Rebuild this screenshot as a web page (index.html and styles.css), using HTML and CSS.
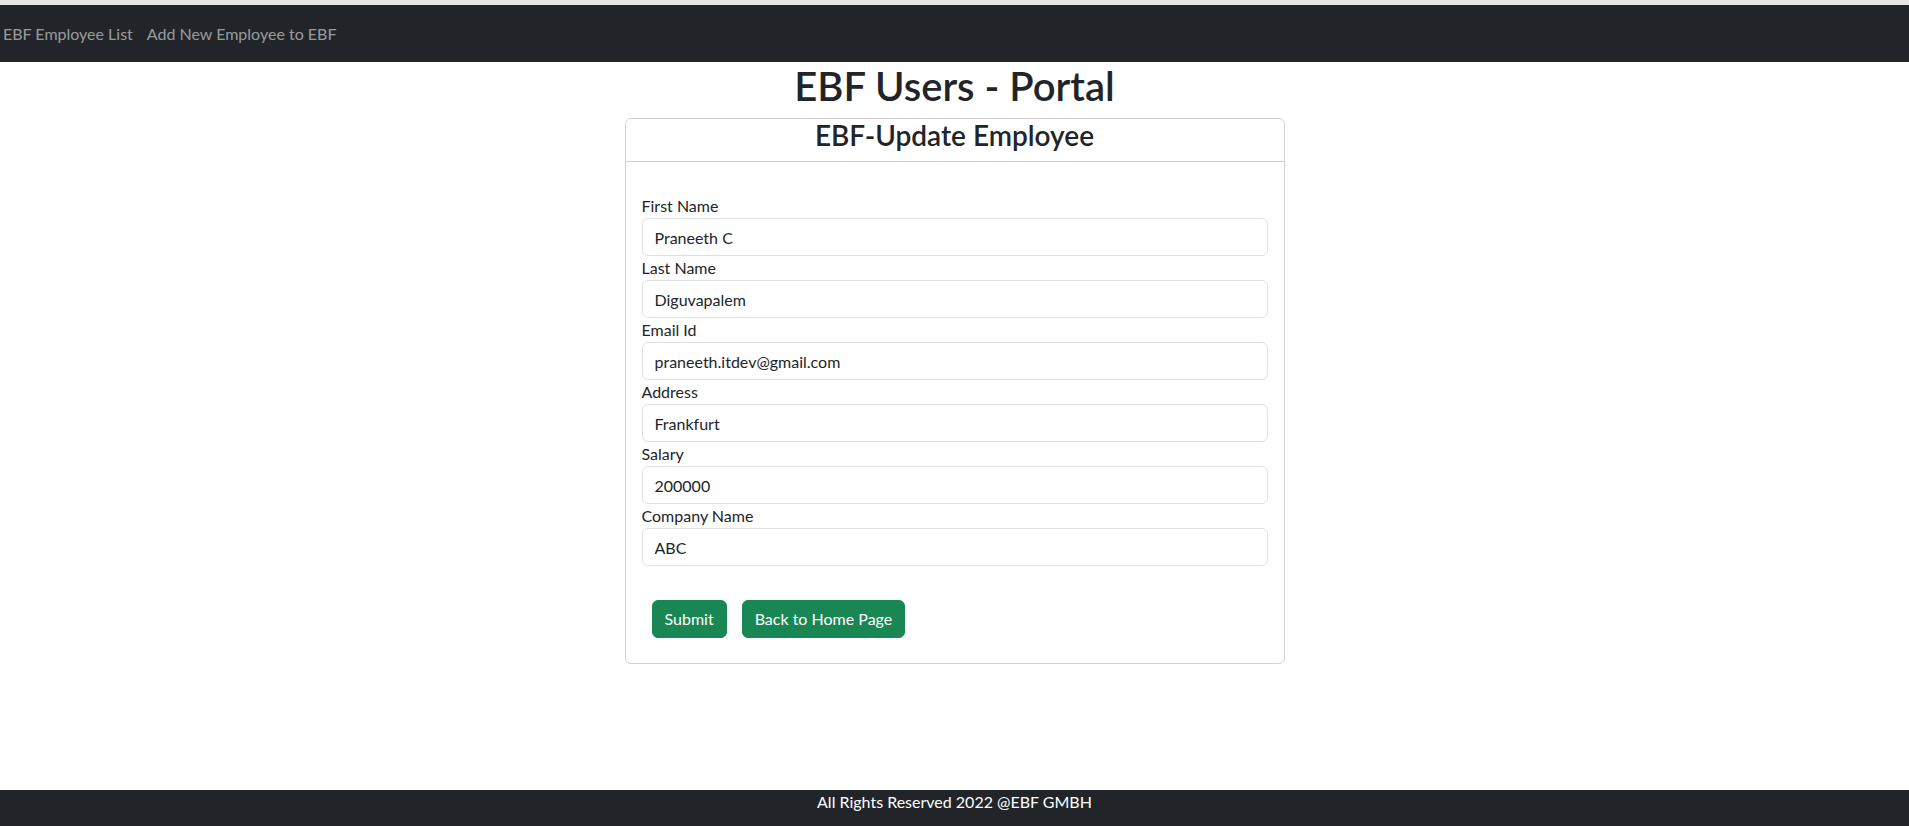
FILE: index.html
```html
<!DOCTYPE html>
<html lang="en">
<head>
<meta charset="utf-8">
<title>EBF Users - Portal</title>
<link rel="stylesheet" href="styles.css">
</head>
<body>
<div class="top-strip"></div>
<nav class="navbar">
  <a class="nav-link" href="#">EBF Employee List</a>
  <a class="nav-link" href="#">Add New Employee to EBF</a>
</nav>
<main class="main">
  <h1 class="page-title">EBF Users - Portal</h1>
  <div class="card">
    <div class="card-header">
      <h3 class="card-title">EBF-Update Employee</h3>
    </div>
    <form class="card-body">
      <div class="field">
        <label class="form-label">First Name</label>
        <input class="form-control" type="text" value="Praneeth C">
      </div>
      <div class="field">
        <label class="form-label">Last Name</label>
        <input class="form-control" type="text" value="Diguvapalem">
      </div>
      <div class="field">
        <label class="form-label">Email Id</label>
        <input class="form-control" type="text" value="praneeth.itdev@gmail.com">
      </div>
      <div class="field">
        <label class="form-label">Address</label>
        <input class="form-control" type="text" value="Frankfurt">
      </div>
      <div class="field">
        <label class="form-label">Salary</label>
        <input class="form-control" type="text" value="200000">
      </div>
      <div class="field">
        <label class="form-label">Company Name</label>
        <input class="form-control" type="text" value="ABC">
      </div>
      <div class="actions">
        <button class="btn" type="button">Submit</button>
        <button class="btn" type="button">Back to Home Page</button>
      </div>
    </form>
  </div>
</main>
<footer class="footer">All Rights Reserved 2022 @EBF GMBH</footer>
</body>
</html>
```
FILE: styles.css
```css
html, body {
  margin: 0;
  padding: 0;
}
body {
  font-family: Lato, "Liberation Sans", sans-serif;
  font-size: 16px;
  line-height: 1.5;
  color: #212529;
  background: #fff;
  min-height: 100vh;
  display: flex;
  flex-direction: column;
}
.top-strip {
  height: 5px;
  background: #e6e6e6;
}
.navbar {
  height: 57px;
  background: #212529;
  display: flex;
  align-items: center;
  gap: 14px;
  padding-left: 3px;
}
.nav-link {
  color: rgba(255, 255, 255, 0.55);
  text-decoration: none;
}
.main {
  flex: 1;
  display: flex;
  flex-direction: column;
  align-items: center;
}
.page-title {
  font-size: 40px;
  font-weight: 600;
  line-height: 1.2;
  margin: 0 0 8px;
}
.card {
  width: 660px;
  box-sizing: border-box;
  border: 1px solid rgba(0, 0, 0, 0.175);
  border-radius: 6px;
}
.card-header {
  height: 42px;
  border-bottom: 1px solid rgba(0, 0, 0, 0.175);
  text-align: center;
}
.card-title {
  font-size: 28px;
  font-weight: 600;
  line-height: 1.2;
  margin: 0;
}
.card-body {
  padding: 32px 16px 16px;
  margin: 0;
}
.form-label {
  display: block;
}
.form-control {
  display: block;
  width: 100%;
  box-sizing: border-box;
  height: 38px;
  padding: 6px 12px;
  font: inherit;
  color: #212529;
  background: #fff;
  border: 1px solid #dee2e6;
  border-radius: 6px;
  outline: none;
}
.actions {
  display: flex;
  gap: 15px;
  padding: 34px 10px 0;
  margin-bottom: 9px;
}
.btn {
  height: 38px;
  padding: 6px 12px;
  font: inherit;
  color: #fff;
  background: #198754;
  border: 1px solid #198754;
  border-radius: 6px;
  cursor: pointer;
}
.footer {
  height: 36px;
  background: #212529;
  color: #fff;
  text-align: center;
  line-height: 24px;
}
```
